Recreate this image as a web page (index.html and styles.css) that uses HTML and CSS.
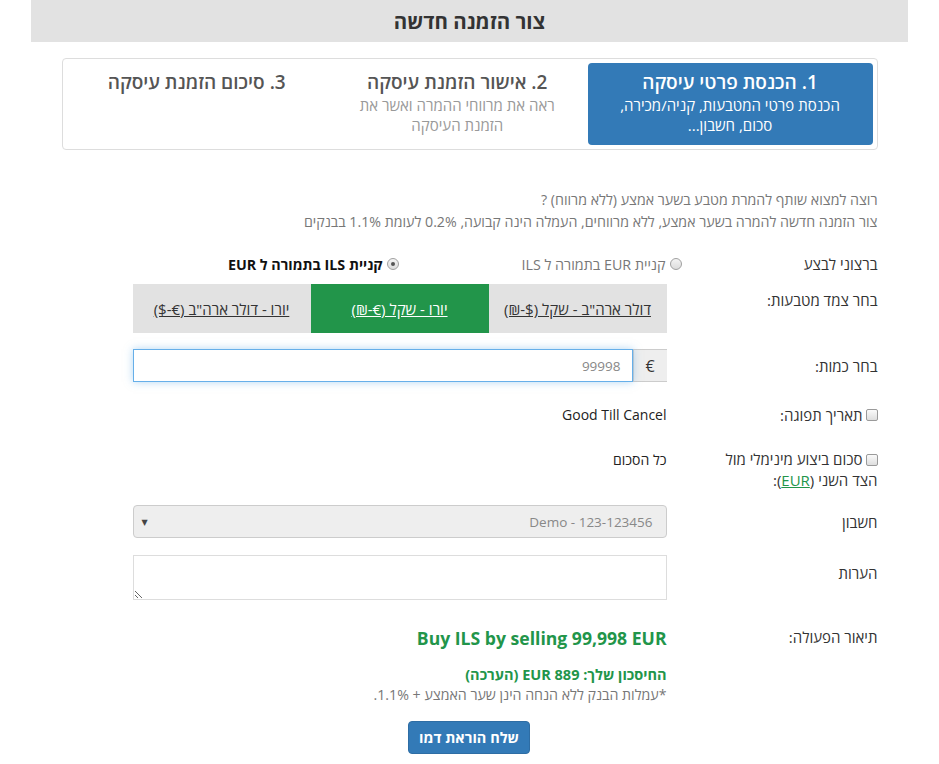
FILE: index.html
```html
<!DOCTYPE html>
<html lang="he" dir="rtl">
<head>
<meta charset="utf-8">
<title>צור הזמנה חדשה</title>
<link rel="stylesheet" href="styles.css">
</head>
<body>
<header class="title-bar"><h1>צור הזמנה חדשה</h1></header>
<main class="container">
  <div class="wizard">
    <div class="step active">
      <div class="step-title">1. הכנסת פרטי עיסקה</div>
      <div class="step-desc">הכנסת פרטי המטבעות, קניה/מכירה,<br>סכום, חשבון...</div>
    </div>
    <div class="step">
      <div class="step-title">2. אישור הזמנת עיסקה</div>
      <div class="step-desc">ראה את מרווחי ההמרה ואשר את<br>הזמנת העיסקה</div>
    </div>
    <div class="step">
      <div class="step-title">3. סיכום הזמנת עיסקה</div>
    </div>
  </div>

  <div class="intro">
    <p>רוצה למצוא שותף להמרת מטבע בשער אמצע (ללא מרווח) ?</p>
    <p>צור הזמנה חדשה להמרה בשער אמצע, ללא מרווחים, העמלה הינה קבועה, 0.2% לעומת 1.1% בבנקים</p>
  </div>

  <form class="form">
    <div class="row row-radio">
      <div class="lbl">ברצוני לבצע</div>
      <div class="ctl choice-group">
        <span class="choice"><span class="radio"></span><span class="choice-text muted">קניית EUR בתמורה ל ILS</span></span>
        <span class="choice"><span class="radio checked"></span><span class="choice-text strong">קניית ILS בתמורה ל EUR</span></span>
      </div>
    </div>

    <div class="row row-pairs">
      <div class="lbl lbl-top-5">בחר צמד מטבעות:</div>
      <div class="ctl pairs">
        <a class="pair">דולר ארה"ב - שקל ($-₪)</a>
        <a class="pair active">יורו - שקל (€-₪)</a>
        <a class="pair">יורו - דולר ארה"ב (€-$)</a>
      </div>
    </div>

    <div class="row row-amount">
      <div class="lbl">בחר כמות:</div>
      <div class="ctl amount-group">
        <span class="addon">€</span>
        <input class="amount-input" type="text" value="99998">
      </div>
    </div>

    <div class="row row-expiry">
      <div class="lbl"><span class="checkbox"></span>תאריך תפוגה:</div>
      <div class="ctl value-text">Good Till Cancel</div>
    </div>

    <div class="row row-min">
      <div class="lbl lbl-wrap"><span class="checkbox"></span>סכום ביצוע מינימלי מול<br>הצד השני (<a class="green-link">EUR</a>):</div>
      <div class="ctl value-text">כל הסכום</div>
    </div>

    <div class="row row-account">
      <div class="lbl">חשבון</div>
      <div class="ctl select">
        <span class="select-text">Demo - 123-123456</span>
        <span class="select-arrow">▼</span>
      </div>
    </div>

    <div class="row row-notes">
      <div class="lbl lbl-top-7">הערות</div>
      <div class="ctl"><textarea class="notes"></textarea></div>
    </div>

    <div class="row row-desc">
      <div class="lbl lbl-top-1">תיאור הפעולה:</div>
      <div class="ctl">
        <div class="summary-title">Buy ILS by selling 99,998 EUR</div>
        <div class="savings">החיסכון שלך: EUR 889 (הערכה)</div>
        <div class="fee-note">*עמלות הבנק ללא הנחה הינן שער האמצע + 1.1%.</div>
      </div>
    </div>

    <div class="actions">
      <button type="button" class="btn-primary">שלח הוראת דמו</button>
    </div>
  </form>
</main>
</body>
</html>
```
FILE: styles.css
```css
html, body {
  margin: 0;
  padding: 0;
  background: #fff;
}

body {
  direction: rtl;
  font-family: "Open Sans", "DejaVu Sans", sans-serif;
  font-size: 14px;
  color: #333;
}

.title-bar {
  width: 877px;
  height: 42px;
  margin: 0 auto;
  background: #e2e2e2;
  display: flex;
  align-items: center;
  justify-content: center;
}

.title-bar h1 {
  margin: 0;
  font-size: 20.5px;
  font-weight: 700;
  color: #333;
}

.container {
  width: 816px;
  margin: 0 auto;
}

/* wizard */
.wizard {
  margin-top: 16px;
  height: 92px;
  box-sizing: border-box;
  border: 1px solid #ddd;
  border-radius: 4px;
  padding: 4px;
  display: flex;
}

.step {
  flex: 1;
  text-align: center;
  padding-top: 6px;
}

.step.active {
  flex: 0 0 285px;
  background: #337ab7;
  border-radius: 4px;
}

.step-title {
  font-size: 19px;
  line-height: 26px;
  font-weight: 600;
  color: #555;
}

.step-desc {
  font-size: 15px;
  line-height: 20px;
  color: #999;
}

.step.active .step-title,
.step.active .step-desc {
  color: #fff;
}

/* intro */
.intro {
  margin-top: 39px;
  color: #777;
  font-size: 14.2px;
  line-height: 22px;
}

.intro p {
  margin: 0;
}

/* form */
.form {
  margin: 0;
}

.row {
  display: grid;
  grid-template-columns: 211px 534px;
  align-items: start;
}

.lbl {
  font-size: 15px;
  line-height: 22px;
  color: #333;
  display: flex;
  align-items: center;
}

.lbl-wrap {
  display: block;
  line-height: 21px;
}

.lbl-top-5 { padding-top: 5px; }
.lbl-top-7 { padding-top: 7px; }
.lbl-top-1 { padding-top: 1px; }

.row-radio { margin-top: 20px; align-items: center; }
.row-pairs { margin-top: 9px; }
.row-amount { margin-top: 16px; align-items: center; }
.row-expiry { margin-top: 22px; }
.row-min { margin-top: 23px; }
.row-account { margin-top: 14px; align-items: center; }
.row-notes { margin-top: 17px; }
.row-desc { margin-top: 25px; }

/* radios */
.choice-group {
  display: flex;
  margin-right: -15px;
  height: 22px;
  align-items: center;
}

.choice {
  flex: none;
  width: 283px;
  display: flex;
  align-items: center;
  gap: 4px;
}

.radio {
  width: 12px;
  height: 12px;
  border-radius: 50%;
  border: 1px solid #a0a0a0;
  background: linear-gradient(#f4f4f4, #dcdcdc);
  box-sizing: border-box;
  position: relative;
  flex: none;
}

.radio.checked::after {
  content: "";
  position: absolute;
  left: 3px;
  top: 3px;
  width: 4px;
  height: 4px;
  border-radius: 50%;
  background: #555;
}

.choice-text {
  font-size: 14.3px;
}

.choice-text.muted {
  color: #777;
}

.choice-text.strong {
  font-weight: 700;
  color: #111;
}

/* pairs */
.pairs {
  display: flex;
  height: 49px;
}

.pair {
  flex: 1;
  display: flex;
  align-items: center;
  justify-content: center;
  background: #e2e2e2;
  color: #333;
  text-decoration: underline;
  font-size: 15px;
  cursor: pointer;
}

.pair.active {
  background: #22954a;
  color: #fff;
}

/* amount */
.amount-group {
  display: flex;
  height: 33px;
}

.addon {
  width: 34px;
  box-sizing: border-box;
  background: #eee;
  border: 1px solid #ccc;
  border-right: none;
  display: flex;
  align-items: center;
  justify-content: center;
  font-size: 16px;
  color: #333;
}

.amount-input {
  flex: 1;
  height: 33px;
  box-sizing: border-box;
  margin: 0;
  border: 1px solid #66afe9;
  box-shadow: 0 0 8px rgba(102, 175, 233, 0.5);
  outline: none;
  padding: 0 11px;
  direction: rtl;
  text-align: right;
  font-family: "Open Sans", "DejaVu Sans", sans-serif;
  font-size: 13.5px;
  color: #888;
  background: #fff;
}

/* checkbox */
.checkbox {
  width: 12px;
  height: 12px;
  box-sizing: border-box;
  border: 1px solid #9a9a9a;
  border-radius: 2px;
  background: linear-gradient(#fafafa, #dedede);
  margin-left: 3px;
  display: inline-block;
  flex: none;
}

.lbl-wrap .checkbox {
  vertical-align: -1px;
}

.value-text {
  font-size: 14px;
  line-height: 22px;
  font-weight: 500;
  color: #222;
}

.green-link {
  color: #22954a;
  text-decoration: underline;
}

/* select */
.select {
  height: 33px;
  box-sizing: border-box;
  background: #eee;
  border: 1px solid #ccc;
  border-radius: 4px;
  display: flex;
  align-items: center;
  justify-content: space-between;
  padding: 0 13px 0 8px;
}

.select-text {
  color: #888;
  font-size: 13.5px;
}

.select-arrow {
  font-size: 8px;
  color: #444;
}

/* notes */
.notes {
  display: block;
  width: 534px;
  height: 45px;
  box-sizing: border-box;
  margin: 0;
  border: 1px solid #ddd;
  border-radius: 0;
  padding: 4px 8px;
  font-family: "Open Sans", "DejaVu Sans", sans-serif;
  font-size: 13px;
  resize: vertical;
  outline: none;
}

/* description */
.summary-title {
  font-size: 17.6px;
  line-height: 26px;
  font-weight: 700;
  color: #22954a;
}

.savings {
  margin-top: 14px;
  font-size: 14.5px;
  line-height: 20px;
  font-weight: 700;
  color: #22954a;
}

.fee-note {
  font-size: 14.2px;
  line-height: 20px;
  color: #777;
}

/* button */
.actions {
  margin-top: 16px;
  margin-left: -1px;
  text-align: center;
}

.btn-primary {
  height: 33px;
  width: 122px;
  box-sizing: border-box;
  background: #337ab7;
  border: 1px solid #2e6da4;
  border-radius: 4px;
  color: #fff;
  font-family: "Open Sans", "DejaVu Sans", sans-serif;
  font-size: 14.5px;
  font-weight: 700;
  cursor: pointer;
}
```
